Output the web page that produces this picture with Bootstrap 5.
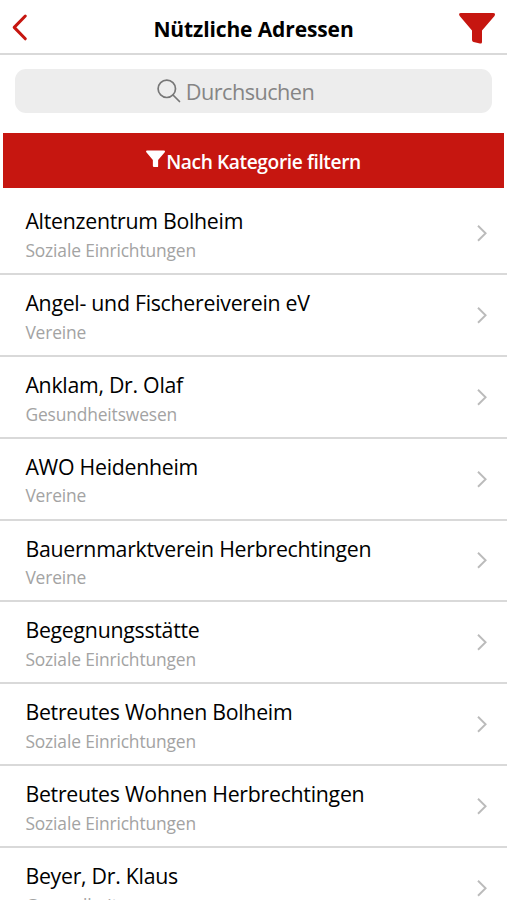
<!DOCTYPE html>
<html lang="de">
<head>
<meta charset="utf-8">
<meta name="viewport" content="width=device-width, initial-scale=1">
<title>Nützliche Adressen</title>
<link rel="stylesheet" href="https://cdn.jsdelivr.net/npm/bootstrap@5.3.0/dist/css/bootstrap.min.css">
<style>
body{font-family:"Open Sans",sans-serif;color:#000;background:#fff;height:900px}
.topbar{height:55px;border-bottom:2px solid #d9d9d9;padding:0 12px}
.topbar h1{font-size:21px;letter-spacing:-.12px;font-weight:700;line-height:28px;margin:5px 0 0}
.side{width:36px}
.search-area{padding:14px 15px 20px}
.search-box{height:44px;border-radius:11px;background:#ededed;color:#858585;font-size:21.7px;letter-spacing:-.55px;padding-right:36px}
.search-box span{padding-top:2px}
.search-box svg{margin-right:5px}
.filter-btn{height:55px;margin:0 3px;background:#c61610;color:#fff;font-size:19.2px;letter-spacing:-.41px;font-weight:600}
.filter-btn span{padding-top:3px}
.filter-btn svg{margin:0 1px 4px 0}
.addresses{margin-top:5.2px}
.addresses .address.list-group-item{height:81.84px;border-width:0 0 2px;border-color:#d9d9d9;padding:0 19px 0 25.4px}
.address-name{font-size:21.3px;letter-spacing:-.27px;line-height:28px;margin-top:3px}
.address-kind{font-size:17.4px;letter-spacing:-.14px;line-height:24px;color:#a3a3a3;margin-top:2.6px}
</style>
</head>
<body class="overflow-hidden">
<header class="topbar d-flex align-items-center justify-content-between">
<a class="side d-flex" href="#" aria-label="Zurück"><svg width="16" height="28" viewBox="0 0 16 28" fill="none" stroke="#c61610" stroke-width="3" stroke-linecap="round" stroke-linejoin="round"><path d="M13.3 3 2.2 14.4 13.3 25.8"/></svg></a>
<h1>Nützliche Adressen</h1>
<a class="side d-flex" href="#" aria-label="Filter"><svg width="36" height="34" viewBox="0 0 36 34" fill="#c61610"><path d="M2 3h32q3 0 1.500 3L23 20.500v11.500q0 2-2 1.500L14.500 32q-1.500-.4-1.500-2v-9.500L.7 6Q-1 3 2 3Z"/></svg></a>
</header>
<main>
<div class="search-area"><div class="search-box d-flex align-items-center justify-content-center"><svg width="24" height="24" viewBox="0 0 24 24" fill="none" stroke="#777" stroke-width="1.7" stroke-linecap="round"><circle cx="9.800" cy="9.800" r="8.700"/><path d="m16 16 6.500 6.500"/></svg><span>Durchsuchen</span></div></div>
<a class="filter-btn d-flex align-items-center justify-content-center text-decoration-none" href="#"><svg width="19" height="18" viewBox="0 0 36 34" fill="#fff"><path d="M2 1h32q3 0 1.500 3L23 19v11.500q0 2-2 1.500h-6.500q-1.500-.4-1.500-2V19L.7 4Q-1 1 2 1Z"/></svg><span>Nach Kategorie filtern</span></a>
<div class="addresses list-group list-group-flush" id="addresses"></div>
</main>
<script src="https://cdn.jsdelivr.net/npm/bootstrap@5.3.0/dist/js/bootstrap.bundle.min.js"></script>
<script>
const entries=[["Altenzentrum Bolheim","Soziale Einrichtungen"],["Angel- und Fischereiverein eV","Vereine"],["Anklam, Dr. Olaf","Gesundheitswesen"],["AWO Heidenheim","Vereine"],["Bauernmarktverein Herbrechtingen","Vereine"],["Begegnungsstätte","Soziale Einrichtungen"],["Betreutes Wohnen Bolheim","Soziale Einrichtungen"],["Betreutes Wohnen Herbrechtingen","Soziale Einrichtungen"],["Beyer, Dr. Klaus","Gesundheitswesen"]];
document.getElementById("addresses").innerHTML=entries.map(([n,k])=>`<a href="#" class="address list-group-item d-flex align-items-center justify-content-between"><div><div class="address-name text-black">${n}</div><div class="address-kind">${k}</div></div><svg width="12" height="18" viewBox="0 0 12 18" fill="none" stroke="#bbb" stroke-width="1.900"><path d="m2 1.800 7.600 7.500L2 16.800"/></svg></a>`).join("");
</script>
</body>
</html>
